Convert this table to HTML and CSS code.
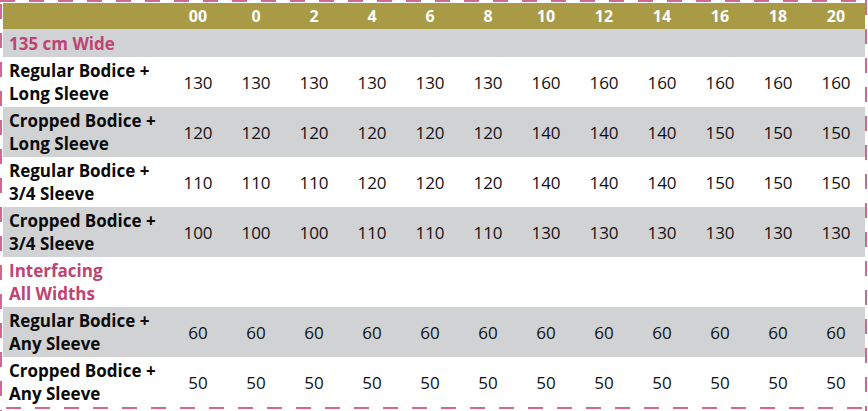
FILE: index.html
```html
<!DOCTYPE html>
<html>
<head>
<meta charset="utf-8">
<link rel="stylesheet" href="styles.css">
</head>
<body>
<div class="frame">
<table class="chart">
<colgroup><col class="c-label"><col span="12"></colgroup>
<thead>
<tr class="head"><th></th><th>00</th><th>0</th><th>2</th><th>4</th><th>6</th><th>8</th><th>10</th><th>12</th><th>14</th><th>16</th><th>18</th><th>20</th></tr>
</thead>
<tbody>
<tr class="section grey"><td class="label pink" colspan="13">135 cm Wide</td></tr>
<tr class="row"><td class="label">Regular Bodice +<br>Long Sleeve</td><td>130</td><td>130</td><td>130</td><td>130</td><td>130</td><td>130</td><td>160</td><td>160</td><td>160</td><td>160</td><td>160</td><td>160</td></tr>
<tr class="row grey"><td class="label">Cropped Bodice +<br>Long Sleeve</td><td>120</td><td>120</td><td>120</td><td>120</td><td>120</td><td>120</td><td>140</td><td>140</td><td>140</td><td>150</td><td>150</td><td>150</td></tr>
<tr class="row"><td class="label">Regular Bodice +<br>3/4 Sleeve</td><td>110</td><td>110</td><td>110</td><td>120</td><td>120</td><td>120</td><td>140</td><td>140</td><td>140</td><td>150</td><td>150</td><td>150</td></tr>
<tr class="row grey"><td class="label">Cropped Bodice +<br>3/4 Sleeve</td><td>100</td><td>100</td><td>100</td><td>110</td><td>110</td><td>110</td><td>130</td><td>130</td><td>130</td><td>130</td><td>130</td><td>130</td></tr>
<tr class="row"><td class="label pink" colspan="13">Interfacing<br>All Widths</td></tr>
<tr class="row grey"><td class="label">Regular Bodice +<br>Any Sleeve</td><td>60</td><td>60</td><td>60</td><td>60</td><td>60</td><td>60</td><td>60</td><td>60</td><td>60</td><td>60</td><td>60</td><td>60</td></tr>
<tr class="row"><td class="label">Cropped Bodice +<br>Any Sleeve</td><td>50</td><td>50</td><td>50</td><td>50</td><td>50</td><td>50</td><td>50</td><td>50</td><td>50</td><td>50</td><td>50</td><td>50</td></tr>
</tbody>
</table>
</div>
</body>
</html>
```
FILE: styles.css
```css
html, body {
  margin: 0;
  padding: 0;
  background: #ffffff;
}
body {
  font-family: "Open Sans", "Noto Sans", sans-serif;
  color: #111111;
}
.frame {
  width: 862px;
  height: 404px;
  padding: 3px 3px 4px 3px;
  background:
    repeating-linear-gradient(to right, #d06891 0 15px, transparent 15px 29px) 0 0 / 100% 2px no-repeat,
    repeating-linear-gradient(to right, #d06891 0 15px, transparent 15px 29px) 6px 407px / 100% 2px no-repeat,
    repeating-linear-gradient(to bottom, #d06891 0 15px, transparent 15px 29px) 0 4px / 2px 100% no-repeat,
    repeating-linear-gradient(to bottom, #d06891 0 15px, transparent 15px 29px) 865px 0 / 2px 100% no-repeat;
}
.chart {
  width: 862px;
  border-collapse: collapse;
  table-layout: fixed;
}
.c-label {
  width: 166px;
}
.chart th, .chart td {
  padding: 0;
  text-align: center;
}
.head {
  background: #a99a45;
  height: 26px;
}
.head th {
  color: #ffffff;
  font-weight: 700;
  font-size: 16px;
  line-height: 26px;
}
.section {
  height: 28px;
}
.row {
  height: 50px;
}
.grey {
  background: #d1d2d4;
}
.chart td {
  font-size: 17px;
  font-weight: 400;
}
.chart td.label {
  text-align: left;
  padding-left: 6px;
  font-weight: 700;
  font-size: 17px;
  line-height: 23px;
  color: #0a0a0a;
}
.chart td.pink {
  color: #bf4373;
}
```
